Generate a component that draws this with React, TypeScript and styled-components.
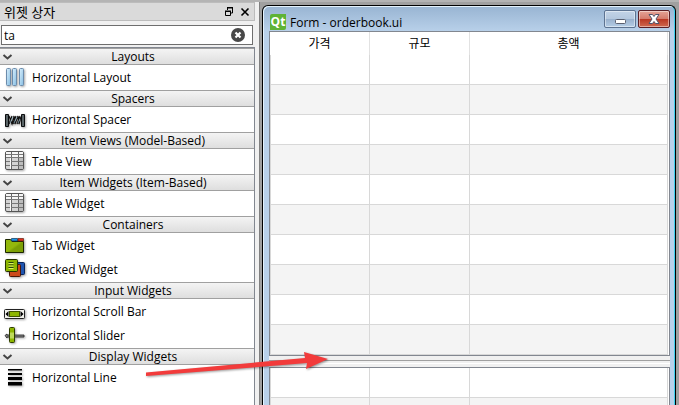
import React from 'react';
import styled, { createGlobalStyle } from 'styled-components';

const GlobalStyle = createGlobalStyle`
  * { box-sizing: border-box; }
  html, body, #root { height: 100%; }
  body {
    margin: 0;
    overflow: hidden;
    background: #a0a0a0;
    color: #000;
    font-family: "Open Sans", "Noto Sans CJK KR", sans-serif;
    font-size: 12px;
    line-height: 16px;
  }
  button, input { font: inherit; color: inherit; }
`;

const Page = styled.div`
  position: relative;
  display: flex;
  height: 100%;
  overflow: hidden;
  border-top: 2px solid #b4b4b4;
`;

const Dock = styled.aside`
  flex: none;
  display: flex;
  flex-direction: column;
  width: 259px;
  padding-right: 4px;
  background: #f0f0f0;
`;

const DockTitle = styled.header`
  display: flex;
  align-items: center;
  gap: 6px;
  height: 19px;
  padding: 0 4px;
  background: #dadada;
  border: 1px solid #bcbcbc;
  border-left: 0;
`;

const DockName = styled.h1`
  flex: 1;
  margin: 0;
  font-size: 13px;
  font-weight: 400;
`;

const IconButton = styled.button`
  display: flex;
  padding: 0;
  border: 0;
  background: none;
`;

const SearchBox = styled.div`
  display: flex;
  align-items: center;
  height: 20px;
  margin: 4px 2px 2px 1px;
  padding-right: 7px;
  border: 1px solid #6e6e6e;
  background: #fff;
`;

const SearchInput = styled.input`
  flex: 1;
  min-width: 0;
  height: 18px;
  padding: 0 2px;
  border: 0;
  outline: 0;
  background: none;
`;

const WidgetList = styled.div`
  flex: 1;
  overflow: hidden;
  background: #fff;
  border: 1px solid #828790;
  border-left: 0;
  border-bottom: 0;
`;

const SectionHead = styled.button`
  display: grid;
  grid-template-columns: 12px 1fr;
  align-items: center;
  width: 100%;
  height: 17px;
  margin-bottom: 1px;
  padding: 0 2px;
  border: 0;
  border-top: 1px solid #a0a0a0;
  border-bottom: 1px solid #a0a0a0;
  background: linear-gradient(#f4f4f4, #dedede);
  line-height: 15px;
  text-align: center;
`;

const Items = styled.ul`
  margin: 0;
  padding: 0;
  list-style: none;
`;

const Item = styled.li`
  display: flex;
  align-items: center;
  gap: 7px;
  height: 24px;
  padding-left: 4px;
  white-space: nowrap;
`;

const Mdi = styled.main`
  flex: 1;
  min-width: 0;
  display: flex;
  padding: 3px 3px 0 2px;
  background: #a0a0a0;
  border-left: 1px solid #808080;
`;

const FormWindow = styled.section`
  flex: 1;
  min-width: 0;
  display: flex;
  flex-direction: column;
  padding: 0 5px 0 6px;
  border: 1px solid #000;
  border-bottom: 0;
  border-radius: 6px 6px 0 0;
  background: linear-gradient(#98b4d2, #b9d1ea 26px, #b9d1ea);
  box-shadow: inset 1px 1px 0 #e4f2fc, inset -1px 0 0 #3fd0ee;
`;

const TitleBar = styled.header`
  display: flex;
  align-items: flex-start;
  gap: 2px;
  height: 25px;
  padding: 4px 0 0 1px;
`;

const Title = styled.h2`
  flex: 1;
  display: flex;
  align-items: flex-start;
  gap: 4px;
  margin: 4px 0 0;
  font-size: 12px;
  font-weight: 400;
  line-height: 17px;
  white-space: nowrap;
`;

const QtLogo = styled.span`
  width: 16px;
  height: 16px;
  border-radius: 2px 0 2px 0;
  background: #5fb336;
  color: #fff;
  font: 700 12px/15px "Open Sans", sans-serif;
  text-align: center;
`;

const WindowButton = styled.button<{ $close?: boolean }>`
  display: flex;
  align-items: center;
  justify-content: center;
  width: 32px;
  height: 18px;
  padding: 0;
  border: 1px solid ${p => (p.$close ? '#5a1f25' : '#5d7391')};
  border-radius: 2px;
  background: ${p => p.$close
    ? 'linear-gradient(#e5a496, #d47b6b 8px, #b93621 8px, #cf6a50)'
    : 'linear-gradient(#c3d4e7, #b4c8de 8px, #98b0cc 8px, #b4cde6)'};
  box-shadow: inset 0 0 0 1px rgba(255, 255, 255, 0.45);
`;

const Body = styled.div`
  flex: 1;
  min-height: 0;
  overflow: hidden;
  background: #f0f0f0;
`;

const TableFrame = styled.div`
  padding-right: 1px;
  overflow: hidden;
  border: 1px solid #828790;
  background: #fff;
`;

const Grid = styled.table`
  width: 100%;
  table-layout: fixed;
  border-collapse: separate;
  border-spacing: 0;
`;

const HeadCell = styled.th<{ $wide?: boolean }>`
  width: ${p => (p.$wide ? 'auto' : '100px')};
  height: 23px;
  padding: 0;
  border-right: 1px solid #e2e2e2;
  font-weight: 400;
`;

const Row = styled.tr`
  background: #fff;
  &:nth-child(even) { background: #f4f4f4; }
`;

const Cell = styled.td`
  height: 30px;
  padding: 0;
  border-right: 1px solid #d8d8d8;
  border-bottom: 1px solid #d8d8d8;
  &:first-child { border-left: 1px solid #d8d8d8; }
`;

const Splitter = styled.div`
  height: 11px;
  padding-top: 4px;
  &::before {
    content: '';
    display: block;
    height: 2px;
    border-top: 1px solid #a0a0a0;
    border-bottom: 1px solid #fff;
  }
`;

const Arrow = styled.svg`
  position: absolute;
  left: 144px;
  top: 348px;
  pointer-events: none;
  filter: drop-shadow(1px 1px 1px rgba(0, 0, 0, 0.4));
`;

const ItemIcon = styled.svg`
  flex: none;
  filter: drop-shadow(1px 1px 1px rgba(0, 0, 0, 0.35));
`;

type IconName = 'layout' | 'spacer' | 'table' | 'tab' | 'stack' | 'scroll' | 'slider' | 'line';

const drawings: Record<IconName, React.ReactNode> = {
  layout: (
    <>
      <linearGradient id="pane" x1="0" y1="0" x2="1" y2="1">
        <stop offset="0" stopColor="#d9effc" />
        <stop offset="1" stopColor="#86bde2" />
      </linearGradient>
      {[2, 8, 15].map(x => (
        <rect key={x} x={x + 0.5} y="1.5" width="4" height="17" rx="1" fill="url(#pane)" stroke="#6c8cac" />
      ))}
    </>
  ),
  spacer: (
    <>
      <path d="M5 7l3 8 2-8 1 8 3-8 1 8 2-7M5 15l3-8M9 15l3-8M13 15l3-8" fill="none" stroke="#111" strokeWidth="1.2" />
      <path d="M6 14l3-6m1 6l3-6m1 6l2-4" stroke="#8fb0c0" strokeWidth=".8" />
      <path d="M1.5 5.5h3v12h-3zM17.5 5.5h3v12h-3z" fill="#596366" stroke="#0b0d0e" />
    </>
  ),
  table: (
    <>
      <rect x="1.5" y="0.5" width="18" height="18" rx="1.5" fill="#d4d4d4" stroke="#555" />
      <path d="M2 1h17v5H2z" fill="#f6f6f6" />
      <path d="M14 7h5v11h-5z" fill="#bdbdbd" />
      <path d="M7.500 1v17M14.500 1v17" stroke="#666" />
      <path d="M2 3.500h17M2 6.500h17M2 10.500h17M2 14.500h17" stroke="#777" />
      <path d="M6.500 7v11" stroke="#fafafa" />
    </>
  ),
  tab: (
    <>
      <linearGradient id="leaf" x1="0" y1="0" x2="1" y2="1">
        <stop offset=".5" stopColor="#93b80c" />
        <stop offset=".6" stopColor="#7c9f06" />
      </linearGradient>
      <path d="M1.5 4.5h5l1.500 2h11.500v11h-18z" fill="url(#leaf)" stroke="#1c2600" />
      <path d="M7.500 3.500h6v2.500h-6z" fill="#1d95e6" stroke="#103a5c" strokeWidth=".7" />
      <path d="M14 3.500h5.500v2.500H14z" fill="#e2301f" stroke="#621" strokeWidth=".7" />
    </>
  ),
  stack: (
    <>
      <rect x="9.5" y="3.5" width="11" height="12" rx="1" fill="#1f55b0" stroke="#08235a" />
      <rect x="5.500" y="5.500" width="11" height="12" rx="1" fill="#cc4a1b" stroke="#4b1606" />
      <rect x="1.5" y="0.5" width="12" height="12" rx="1" fill="#8db600" stroke="#273300" />
      <path d="M4.500 3.500h5M4.500 6h5M4.500 8.500h5" stroke="#26420b" />
      <path d="M4.500 4.500h5M4.500 7h5M4.500 9.500h5" stroke="#def55b" />
    </>
  ),
  scroll: (
    <>
      <rect x="0.5" y="8.5" width="20" height="9" rx="1" fill="#f2f2ec" stroke="#222" />
      <rect x="5.5" y="10.5" width="10" height="5" fill="#8db600" stroke="#405500" />
      <path d="M4.5 10v6L1.5 13zM16.5 10v6l3-3z" fill="#000" />
    </>
  ),
  slider: (
    <>
      <path d="M1 10.500l2-1.500v1h17v2H3v1z" fill="#888" stroke="#222" strokeWidth=".8" />
      <rect x="5.5" y="2.5" width="5" height="15" rx="1" fill="#8db600" stroke="#2f3e00" />
      <path d="M7 7.500v6M9 7.500v6" stroke="#efffb2" />
    </>
  ),
  line: <path d="M4 2h14v1.500H4zM4 6h14v2H4zM4 10h14v3H4zM4 15h14v3.500H4z" fill="#000" />,
};

const sections: { name: string; items: [IconName, string][] }[] = [
  { name: 'Layouts', items: [['layout', 'Horizontal Layout']] },
  { name: 'Spacers', items: [['spacer', 'Horizontal Spacer']] },
  { name: 'Item Views (Model-Based)', items: [['table', 'Table View']] },
  { name: 'Item Widgets (Item-Based)', items: [['table', 'Table Widget']] },
  { name: 'Containers', items: [['tab', 'Tab Widget'], ['stack', 'Stacked Widget']] },
  { name: 'Input Widgets', items: [['scroll', 'Horizontal Scroll Bar'], ['slider', 'Horizontal Slider']] },
  { name: 'Display Widgets', items: [['line', 'Horizontal Line']] },
];

const Rows = ({ count }: { count: number }) => (
  <tbody>
    {Array.from({ length: count }, (_, i) => (
      <Row key={i}><Cell /><Cell /><Cell /></Row>
    ))}
  </tbody>
);

export default function App() {
  return (
    <>
      <GlobalStyle />
      <Page>
        <Dock>
          <DockTitle>
            <DockName>위젯 상자</DockName>
            <IconButton aria-label="Float">
              <svg width="10" height="10" fill="none" stroke="#000">
                <path d="M3 1h6M3.5 1v2M8.5 1v5H7M1 4.5h6M1.5 4v4.5h5V4" />
                <path d="M3 .5h6M1 4h6" />
              </svg>
            </IconButton>
            <IconButton aria-label="Close">
              <svg width="10" height="10" stroke="#000" strokeWidth="1.6">
                <path d="M1.5 1.5l7 7M8.5 1.5l-7 7" />
              </svg>
            </IconButton>
          </DockTitle>
          <SearchBox>
            <SearchInput aria-label="Filter" defaultValue="ta" />
            <IconButton aria-label="Clear">
              <svg width="14" height="14">
                <circle cx="7" cy="7" r="7" fill="#484848" />
                <path d="M4.5 4.5l5 5M9.5 4.5l-5 5" stroke="#fff" strokeWidth="2.2" />
              </svg>
            </IconButton>
          </SearchBox>
          <WidgetList>
            {sections.map(s => (
              <section key={s.name}>
                <SectionHead>
                  <svg width="11" height="8" fill="none" stroke="#444" strokeWidth="2">
                    <path d="M1.5 2l4 3.5 4-3.5" />
                  </svg>
                  <span>{s.name}</span>
                </SectionHead>
                <Items>
                  {s.items.map(([icon, label]) => (
                    <Item key={label}>
                      <ItemIcon width="21" height="22">{drawings[icon]}</ItemIcon>
                      {label}
                    </Item>
                  ))}
                </Items>
              </section>
            ))}
          </WidgetList>
        </Dock>
        <Mdi>
          <FormWindow>
            <TitleBar>
              <Title><QtLogo>Qt</QtLogo>Form - orderbook.ui</Title>
              <WindowButton aria-label="Minimize">
                <svg width="12" height="12">
                  <rect x="1.5" y="6.5" width="10" height="4" rx="1" fill="#fff" stroke="#5a6070" />
                </svg>
              </WindowButton>
              <WindowButton $close aria-label="Close">
                <svg width="12" height="10">
                  <path d="M1 .5h3.500L6 2.500 7.500.5H11L8 5l3 4.500H7.500L6 7.500l-1.500 2H1L4 5z" fill="#fff" stroke="#51546a" />
                </svg>
              </WindowButton>
            </TitleBar>
            <Body>
              <TableFrame>
                <Grid>
                  <thead>
                    <tr>
                      <HeadCell>가격</HeadCell>
                      <HeadCell>규모</HeadCell>
                      <HeadCell $wide>총액</HeadCell>
                    </tr>
                  </thead>
                  <Rows count={10} />
                </Grid>
              </TableFrame>
              <Splitter />
              <TableFrame>
                <Grid>
                  <colgroup><col width="100" /><col width="100" /><col /></colgroup>
                  <Rows count={10} />
                </Grid>
              </TableFrame>
            </Body>
          </FormWindow>
        </Mdi>
        <Arrow width="190" height="30" viewBox="144 350 190 30">
          <path d="M146 372.500L305 358l-1-6 24 7-22 10 1-6-161 13z" fill="#f23b3b" />
        </Arrow>
      </Page>
    </>
  );
}
